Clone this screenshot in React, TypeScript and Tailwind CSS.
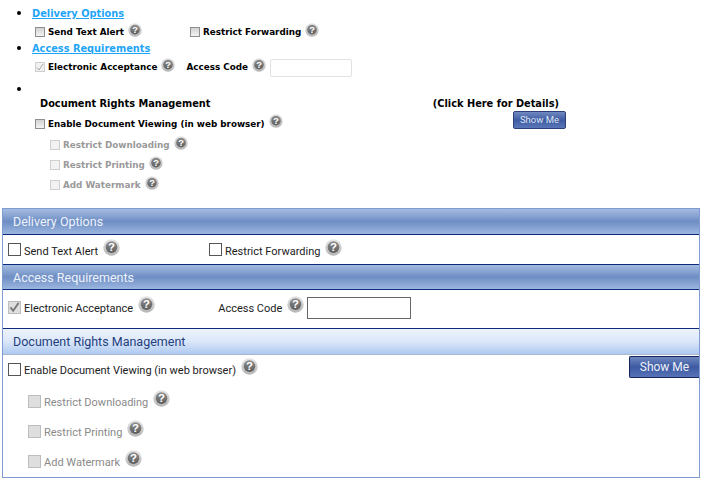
import React from 'react';

const topFont = { fontFamily: '"DejaVu Sans", sans-serif' };
const panelFont = { fontFamily: 'Roboto, sans-serif' };

const HelpIcon = ({ size = 14, className = '' }: { size?: number; className?: string }) => (
  <svg width={size} height={size} viewBox="0 0 18 18" className={`shrink-0 ${className}`}>
    <defs>
      <linearGradient id="helpRing" x1="0" y1="0" x2="0" y2="1">
        <stop offset="0" stopColor="#e6e6e6" />
        <stop offset="1" stopColor="#b5b5b5" />
      </linearGradient>
      <linearGradient id="helpFill" x1="0" y1="0" x2="0" y2="1">
        <stop offset="0" stopColor="#8f8f8f" />
        <stop offset="1" stopColor="#5c5c5c" />
      </linearGradient>
    </defs>
    <circle cx="9" cy="9" r="8.7" fill="url(#helpRing)" />
    <circle cx="9" cy="8.6" r="6.2" fill="url(#helpFill)" />
    <text x="9" y="13" textAnchor="middle" fontSize="12" fontWeight="700" fill="#fff" fontFamily="Liberation Sans, sans-serif">?</text>
  </svg>
);

const TopCheck = ({ disabled, checked }: { disabled?: boolean; checked?: boolean }) => (
  <span className={`inline-flex w-[10px] h-[10px] shrink-0 items-center justify-center border ${disabled ? 'border-[#cfcfcf] bg-[#f2f2f2]' : 'border-[#8e8e8e] bg-gradient-to-b from-[#d2d2d2] to-[#f4f4f4]'}`}>
    {checked && (
      <svg width="8" height="8" viewBox="0 0 8 8"><path d="M1 4.5 3 7 7 1" fill="none" stroke="#a8a8a8" strokeWidth="1" /></svg>
    )}
  </span>
);

const TopOption = ({ label, disabled, checked, muted }: { label: string; disabled?: boolean; checked?: boolean; muted?: boolean }) => (
  <span className="flex items-center">
    <TopCheck disabled={disabled} checked={checked} />
    <span className={`ml-[3px] mt-[1px] font-bold ${muted ? 'text-[#999]' : 'text-black'}`}>{label}</span>
    <HelpIcon size={14} className="ml-[4px] -mt-[5px]" />
  </span>
);

const PanelCheck = ({ disabled, checked }: { disabled?: boolean; checked?: boolean }) => (
  <span className={`inline-flex w-[13px] h-[13px] shrink-0 items-center justify-center border ${disabled ? 'border-[#bdbdbd] bg-[#dedede]' : 'border-[#555] bg-white'}`}>
    {checked && (
      <svg width="12" height="12" viewBox="0 0 12 12"><path d="M1.5 6.5 4.5 10 10.5 1.5" fill="none" stroke="#777" strokeWidth="2" /></svg>
    )}
  </span>
);

const PanelOption = ({ label, disabled, checked }: { label: string; disabled?: boolean; checked?: boolean }) => (
  <span className="flex items-center">
    <PanelCheck disabled={disabled} checked={checked} />
    <span className={`ml-[3px] mt-[3px] ${disabled && !checked ? 'text-[#8a8a8a]' : 'text-[#1c1c1c]'}`}>{label}</span>
    <HelpIcon size={17} className="ml-[5px] -mt-[5px]" />
  </span>
);

const PanelHeader = ({ title, light, lined }: { title: string; light?: boolean; lined?: boolean }) => (
  <div
    className={`flex items-center pl-[10px] text-[12.5px] border-b ${lined ? 'border-t border-t-[#0b2a80]' : ''} ${
      light
        ? 'h-[27px] border-b-[#a9b8cf] bg-gradient-to-b from-[#eef3fc] via-[#dbe7f9] to-[#aec9f0] text-[#1f3f7f]'
        : 'h-[26px] border-b-[#0b2a80] bg-gradient-to-b from-[#a5bce0] via-[#6e8ec4] to-[#9cb6df] text-[#eef3fb]'
    }`}
  >
    {title}
  </div>
);

export default function App() {
  return (
    <div className="w-[707px] h-[482px] bg-white overflow-hidden">
      <ul className="list-disc pl-[32px] pt-[5px] text-[8.8px] leading-[15px]" style={topFont}>
        <li className="h-[15px] text-[13px]">
          <a className="text-[9.8px] font-bold text-[#1fa5f7] underline">Delivery Options</a>
        </li>
        <li className="list-none pl-[3px] pt-[4px] h-[20px] flex items-center">
          <span className="w-[155px]"><TopOption label="Send Text Alert" /></span>
          <TopOption label="Restrict Forwarding" />
        </li>
        <li className="h-[15px] text-[13px]">
          <a className="text-[9.8px] font-bold text-[#1fa5f7] underline">Access Requirements</a>
        </li>
        <li className="list-none pl-[3px] pt-[4px] h-[20px] flex items-center">
          <TopOption label="Electronic Acceptance" disabled checked />
          <span className="ml-[11px] mt-[1px] font-bold">Access Code</span>
          <HelpIcon size={14} className="ml-[4px] -mt-[5px]" />
          <span className="ml-[4px] w-[82px] h-[18px] mt-[1px] rounded-[2px] border border-[#e2e2e2] bg-white" />
        </li>
        <li className="mt-[6px] h-[15px] text-[13px]" />
        <li className="list-none h-[15px] pl-[8px] flex justify-between text-[9.8px] font-bold">
          <span>Document Rights Management</span>
          <span className="mr-[148px]">(Click Here for Details)</span>
        </li>
        <li className="list-none h-[25px] pl-[3px] flex items-center justify-between">
          <TopOption label="Enable Document Viewing (in web browser)" />
          <button className="mr-[141px] -mt-[8px] w-[53px] h-[18px] rounded-[2px] border border-[#2c3f78] bg-gradient-to-b from-[#7189c0] via-[#3f5ca3] to-[#5a76b8] text-[9.5px] text-[#d9e2f3]" style={panelFont}>
            Show Me
          </button>
        </li>
        <li className="list-none pl-[18px] flex flex-col gap-[4px] mt-[1px]">
          <TopOption label="Restrict Downloading" disabled muted />
          <TopOption label="Restrict Printing" disabled muted />
          <TopOption label="Add Watermark" disabled muted />
        </li>
      </ul>

      <div className="mx-[2px] mt-[15px] w-[698px] h-[270px] border border-[#7f9bd0] text-[11px] leading-[17px]" style={panelFont}>
        <PanelHeader title="Delivery Options" />
        <div className="h-[29px] flex items-center pl-[5px]">
          <span className="w-[201px]"><PanelOption label="Send Text Alert" /></span>
          <PanelOption label="Restrict Forwarding" />
        </div>
        <PanelHeader title="Access Requirements" lined />
        <div className="h-[38px] flex items-center pl-[5px] pb-[4px]">
          <PanelOption label="Electronic Acceptance" disabled checked />
          <span className="ml-[63px] mt-[3px] text-[#1c1c1c]">Access Code</span>
          <HelpIcon size={17} className="ml-[5px] -mt-[5px]" />
          <span className="ml-[3px] mt-[1px] w-[104px] h-[22px] border border-[#666] bg-white" />
        </div>
        <PanelHeader title="Document Rights Management" light lined />
        <div className="flex items-start justify-between pl-[5px] pt-[1px]">
          <span className="mt-[3px]"><PanelOption label="Enable Document Viewing (in web browser)" /></span>
          <button className="w-[70px] h-[22px] rounded-l-[2px] border border-r-0 border-[#16245c] bg-gradient-to-b from-[#6f87bf] via-[#3d5aa2] to-[#5873b6] text-[12px] text-[#eef2fa]">
            Show Me
          </button>
        </div>
        <div className="pl-[25px] pt-[12px] flex flex-col gap-[10px]">
          <PanelOption label="Restrict Downloading" disabled />
          <PanelOption label="Restrict Printing" disabled />
          <PanelOption label="Add Watermark" disabled />
        </div>
      </div>
    </div>
  );
}
